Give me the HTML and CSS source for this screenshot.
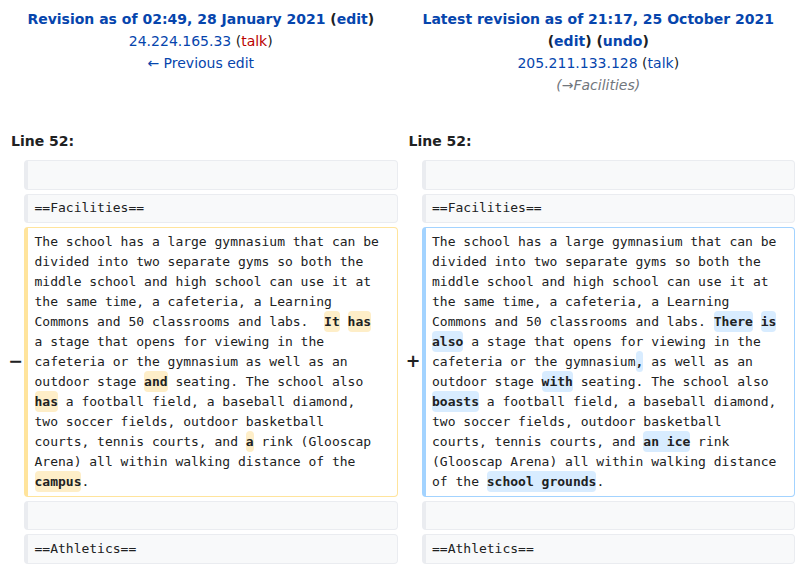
FILE: index.html
```html
<!DOCTYPE html>
<html lang="en">
<head>
<meta charset="utf-8">
<title>Difference between revisions</title>
<link rel="stylesheet" href="styles.css">
</head>
<body>
<div class="diff">
  <div class="diff-title">
    <div><strong><a class="link" href="#">Revision as of 02:49, 28 January 2021</a> <span class="edit">(<a class="link" href="#">edit</a>)</span></strong></div>
    <div><a class="link" href="#">24.224.165.33</a> (<a class="new" href="#">talk</a>)</div>
    <div><a class="link" href="#">← Previous edit</a></div>
  </div>
  <div class="diff-title right">
    <div><strong><a class="link" href="#">Latest revision as of 21:17, 25 October 2021</a> <span class="edit">(<a class="link" href="#">edit</a>)</span> <span class="edit">(<a class="link" href="#">undo</a>)</span></strong></div>
    <div><a class="link" href="#">205.211.133.128</a> (<a class="link" href="#">talk</a>)</div>
    <div class="comment">(→Facilities)</div>
  </div>

  <div class="diff-lineno">Line 52:</div>
  <div class="diff-lineno right">Line 52:</div>

  <div class="diff-marker"></div>
  <div class="diff-line context">&#160;</div>
  <div class="diff-marker"></div>
  <div class="diff-line context">&#160;</div>

  <div class="diff-marker"></div>
  <div class="diff-line context">==Facilities==</div>
  <div class="diff-marker"></div>
  <div class="diff-line context">==Facilities==</div>

  <div class="diff-marker">−</div>
  <div class="diff-line deleted">The school has a large gymnasium that can be divided into two separate gyms so both the middle school and high school can use it at the same time, a cafeteria, a Learning Commons and 50 classrooms and labs.  <span class="change">It</span> <span class="change">has</span> a stage that opens for viewing in the cafeteria or the gymnasium as well as an outdoor stage <span class="change">and</span> seating. The school also <span class="change">has</span> a football field, a baseball diamond, two soccer fields, outdoor basketball courts, tennis courts, and <span class="change">a</span> rink (Glooscap Arena) all within walking distance of the <span class="change">campus</span>.</div>
  <div class="diff-marker">+</div>
  <div class="diff-line added">The school has a large gymnasium that can be divided into two separate gyms so both the middle school and high school can use it at the same time, a cafeteria, a Learning Commons and 50 classrooms and labs. <span class="change">There</span> <span class="change">is</span> <span class="change">also</span> a stage that opens for viewing in the cafeteria or the gymnasium<span class="change">,</span> as well as an outdoor stage <span class="change">with</span> seating. The school also <span class="change">boasts</span> a football field, a baseball diamond, two soccer fields, outdoor basketball courts, tennis courts, and <span class="change">an ice</span> rink (Glooscap Arena) all within walking distance of the <span class="change">school grounds</span>.</div>

  <div class="diff-marker"></div>
  <div class="diff-line context">&#160;</div>
  <div class="diff-marker"></div>
  <div class="diff-line context">&#160;</div>

  <div class="diff-marker"></div>
  <div class="diff-line context">==Athletics==</div>
  <div class="diff-marker"></div>
  <div class="diff-line context">==Athletics==</div>
</div>
</body>
</html>
```
FILE: styles.css
```css
html, body {
  margin: 0;
  padding: 0;
  background: #ffffff;
}

body {
  font-family: "DejaVu Sans", sans-serif;
  font-size: 14px;
  color: #202122;
}

.diff {
  display: grid;
  grid-template-columns: 20px 1fr 24px 1fr;
  row-gap: 4px;
  padding: 4px;
}

.diff-title {
  grid-column: span 2;
  text-align: center;
  line-height: 22px;
  padding: 4px 0;
}

.diff-title.right {
  margin-left: 4px;
}

.link {
  color: #0645ad;
  text-decoration: none;
}

.new {
  color: #ba0000;
  text-decoration: none;
}

.edit {
  color: #202122;
}

.comment {
  color: #72777d;
  font-style: italic;
}

.diff-lineno {
  grid-column: span 2;
  font-weight: bold;
  line-height: 22px;
  padding: 26px 7px 4px;
}

.diff-lineno.right {
  margin-left: 4px;
}

.diff-marker {
  align-self: center;
  text-align: right;
  padding-right: 1px;
  font-weight: bold;
  font-size: 17.5px;
  line-height: 21px;
}

.diff-line {
  font-family: "DejaVu Sans Mono", monospace;
  font-size: 13px;
  line-height: 20px;
  white-space: pre-wrap;
  overflow-wrap: break-word;
  padding: 3.75px 14px 3.75px 6.5px;
  border-style: solid;
  border-width: 1px 1px 1px 4px;
  border-radius: 4px;
  min-width: 0;
}

.context {
  background: #f8f9fa;
  border-color: #eaecf0;
}

.deleted {
  border-color: #ffe49c;
}

.added {
  border-color: #a3d3ff;
}

.change {
  font-weight: bold;
  border-radius: 4px;
  padding: 3.25px 0;
}

.deleted .change {
  background: #feeec8;
}

.added .change {
  background: #d8ecff;
}
```
